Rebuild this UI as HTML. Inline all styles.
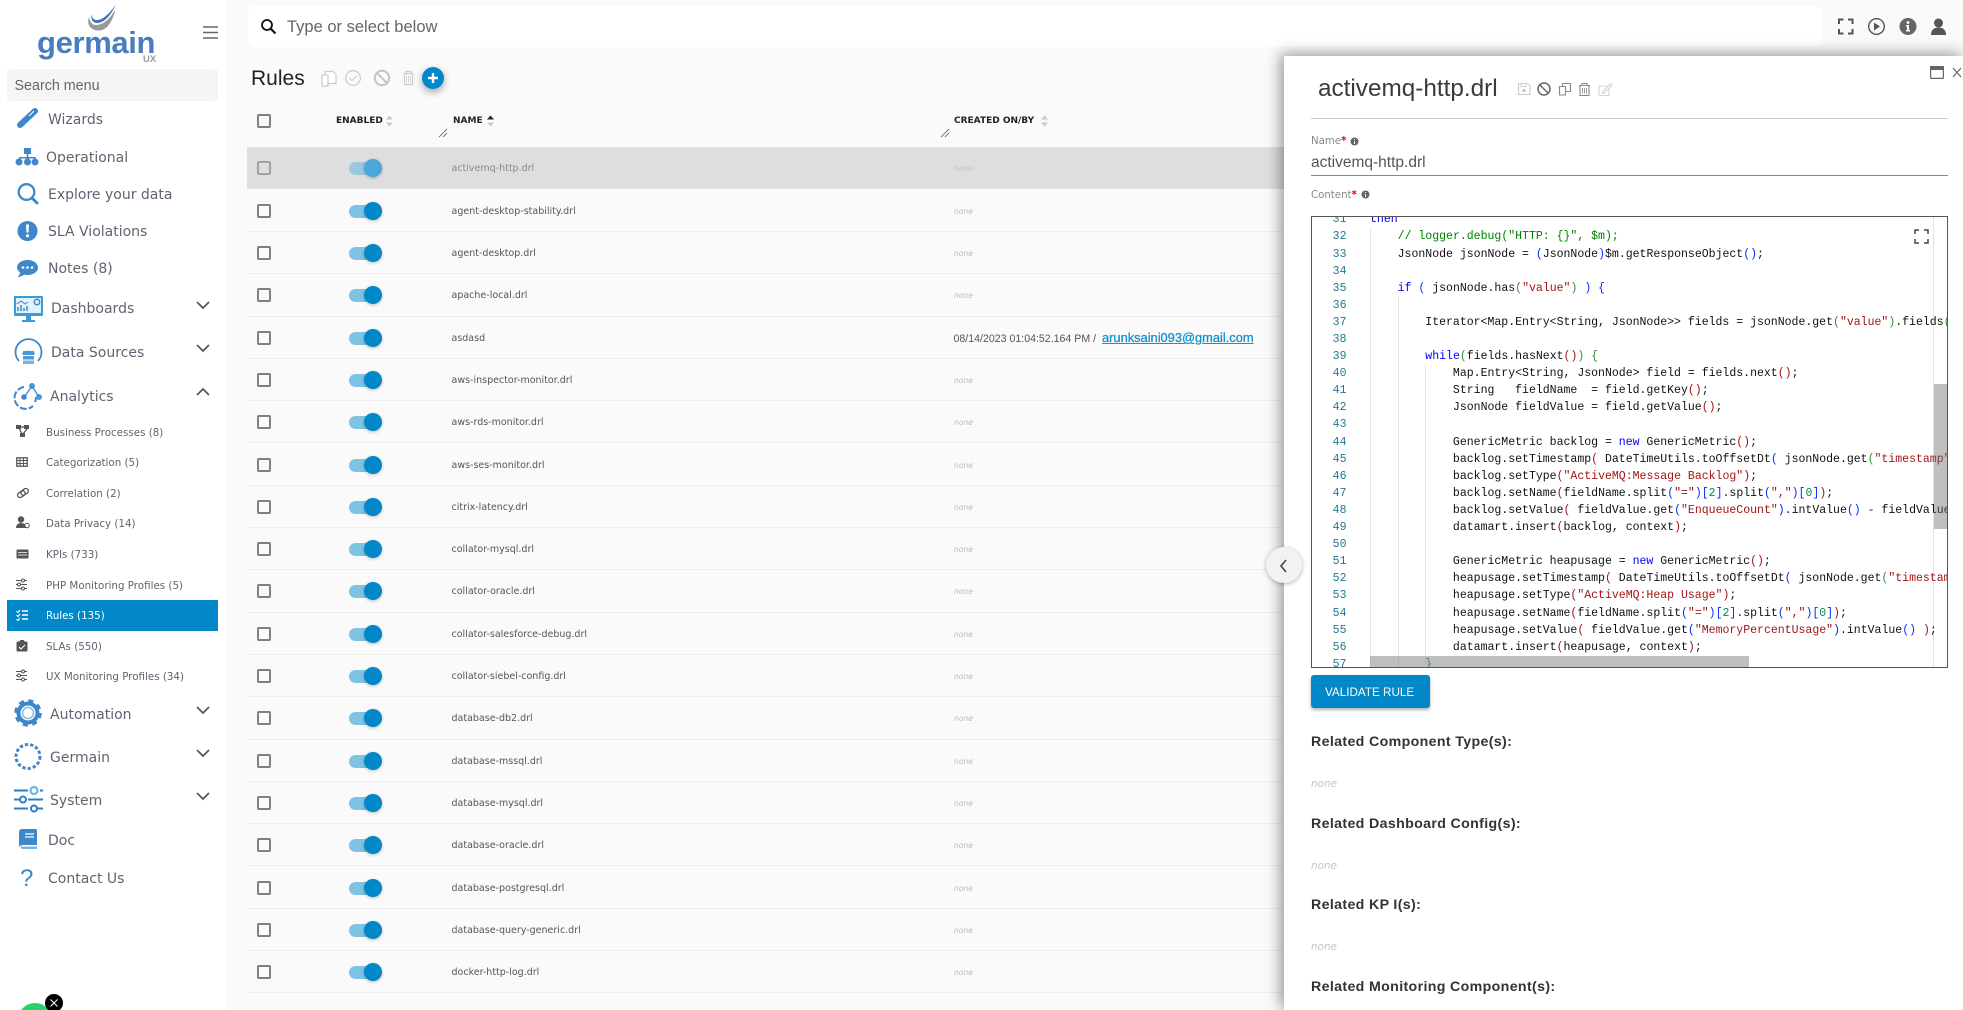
<!DOCTYPE html>
<html lang="en">
<head>
<meta charset="utf-8">
<title>Rules</title>
<style>
*{box-sizing:border-box}
html,body{margin:0;padding:0;width:1963px;height:1010px;overflow:hidden}
#root{position:relative;width:1963px;height:1010px;overflow:hidden;background:#fafafa;font-family:"DejaVu Sans","Liberation Sans",sans-serif;color:#555}
.a{position:absolute;white-space:nowrap;line-height:20px;margin-top:1px}
svg{position:absolute;overflow:visible}
#side{position:absolute;left:0;top:0;width:226px;height:1010px;background:#fff}
.m{position:absolute;white-space:nowrap;line-height:20px;font-size:14px;color:#5e6470;margin-top:1px}
.s{position:absolute;left:46px;white-space:nowrap;line-height:20px;font-size:10.3px;color:#5e6470;margin-top:1px}
.r{position:absolute;left:247px;width:1040px;height:42.3px;border-bottom:1px solid #eee}
.cb{position:absolute;left:10px;top:14px;width:14px;height:14px;border:2px solid #808080;border-radius:2px}
.tg{position:absolute;left:102px;top:15px;width:33px;height:13px;border-radius:7px;background:#7ec3e3}
.kn{position:absolute;left:117px;top:12px;width:18px;height:18px;border-radius:50%;background:#0288c9;box-shadow:0 1px 3px rgba(0,0,0,.25)}
.nm{position:absolute;left:204.5px;top:12px;line-height:20px;font-size:9.5px;color:#555;white-space:nowrap}
.no{position:absolute;left:707px;top:12px;line-height:20px;font-size:7.6px;font-style:italic;color:#bbb;white-space:nowrap}
.hd{position:absolute;top:111px;line-height:20px;font-size:9px;font-weight:bold;color:#222;white-space:nowrap}
#panel{position:absolute;left:1284px;top:56px;width:679px;height:954px;background:#fff;box-shadow:-3px -2px 14px rgba(0,0,0,.42)}
.lb{position:absolute;font-size:10.2px;color:#888;line-height:20px;white-space:nowrap;margin-top:1px}
.lb b{color:#e00;font-weight:bold}
.rel{position:absolute;left:1311px;font:bold 14.2px/20px "Liberation Sans",sans-serif;letter-spacing:.35px;color:#333;white-space:nowrap;margin-top:1px}
.nn{position:absolute;left:1311px;font-size:10.4px;font-style:italic;color:#c4c4c4;line-height:20px;margin-top:1px}
#ed{position:absolute;left:1311px;top:216px;width:637px;height:452px;border:1px solid #555;overflow:hidden;background:#fff}
pre{margin:0;position:absolute;font:11.53px/17.1px "Liberation Mono",monospace;white-space:pre}
#gut{left:0;width:34.5px;top:-5.65px;text-align:right;color:#237893}
#code{left:58px;top:-5.65px;width:577px;overflow:hidden;color:#111}
.k{color:#00f}.c{color:#008000}.t{color:#a31515}.b{color:#0431fa}.g{color:#319331}.n{color:#098658}
.gl{position:absolute;width:1px;background:#e6e6e6}
</style>
</head>
<body>
<div id="root">

<div id="side"></div>

<!-- logo -->
<svg style="left:0;top:0" width="226" height="70" viewBox="0 0 226 70">
<path d="M89 17C86 26 92 31 100 30.500C108 29.500 113 20 115.500 9C110 19 103 25 96 25C92 25 90 22 89 17Z" fill="#9a9a9a"/>
<path d="M91 14C91 21 94 23.500 98 23C106 22 112 13 116 4C111 12 104 19 98 20C94 20.500 92 18 91 14Z" fill="#3f74bd"/>
</svg>
<div class="a" style="left:37px;top:26px;font:bold 31px/32px 'Liberation Sans',sans-serif;color:#4a7cbf;letter-spacing:-.35px">germain</div>
<div class="a" style="left:143px;top:49px;font:bold 9.5px/20px 'Liberation Sans',sans-serif;color:#9a9a9a">UX</div>
<svg style="left:203px;top:26px" width="16" height="14"><path d="M0 1h15M0 6.500h15M0 12h15" stroke="#666" stroke-width="1.600"/></svg>

<div style="position:absolute;left:7px;top:69px;width:211px;height:32px;background:#f5f5f5;border-radius:3px"></div>
<div class="a" style="left:14.500px;top:75px;font:14.3px/20px 'Liberation Sans',sans-serif;color:#666">Search menu</div>

<!-- menu icons -->
<svg style="left:0;top:100px" width="226" height="800" viewBox="0 100 226 800" fill="#3e87cb">
<path d="M20 125L35 111" stroke="#3e87cb" stroke-width="6" stroke-linecap="round"/><path d="M29 116l5-5" stroke="#fff" stroke-width="1"/>
<path d="M24 148h7v6h-7zM26.700 154h1.600v3h7.500v3h-1.600v-1.500h-6v1.500h-1.500v-1.500h-6v1.500h-1.600v-3h7.600z"/><circle cx="19" cy="162" r="3.500"/><circle cx="27.500" cy="162" r="3.500"/><circle cx="35" cy="162" r="3.500"/>
<circle cx="26.500" cy="192" r="7.800" fill="none" stroke="#3e87cb" stroke-width="2.300"/><path d="M32 198l5 5" stroke="#3e87cb" stroke-width="3" stroke-linecap="round"/>
<circle cx="27.500" cy="231" r="10"/><path d="M26 224.500h3l-.5 8h-2z" fill="#fff"/><circle cx="27.500" cy="235.800" r="1.600" fill="#fff"/>
<path d="M27.500 260c5.800 0 10.500 3.300 10.500 7.500s-4.700 7.500-10.500 7.500c-1.200 0-2.300-.1-3.300-.4-2 1.600-4.500 2.400-6.500 2.400 1.300-1.400 2.200-3 2.400-4.600-1.900-1.300-3.100-3.100-3.100-4.900 0-4.200 4.700-7.500 10.500-7.500z"/><circle cx="23" cy="267.500" r="1.300" fill="#fff"/><circle cx="27.500" cy="267.500" r="1.300" fill="#fff"/><circle cx="32" cy="267.500" r="1.300" fill="#fff"/>
<rect x="14" y="296" width="29" height="20" rx="1" fill="#3e9ad6"/><rect x="16" y="298" width="25" height="15" fill="#e3f1fb"/><path d="M18 311v-4M21 311v-6M24 311v-3M27 311v-5" stroke="#3e87cb" stroke-width="1.500"/><path d="M17 304l4-3 4 3 3-2" stroke="#3e87cb" fill="none"/><circle cx="37" cy="302" r="2.700" fill="none" stroke="#3e87cb" stroke-width="1.500"/><path d="M26 316h5v4h4v2H22v-2h4z" fill="#3e9ad6"/>
<path d="M19 361a13 13 0 1 1 19 0" fill="none" stroke="#3e87cb" stroke-width="1.800"/><path d="M22.500 354a9 9 0 0 1 12 0" fill="none" stroke="#3e87cb" stroke-width="1.800"/><rect x="23" y="351" width="11" height="4" fill="#4a9ad8"/><rect x="23" y="356" width="11" height="3.500" fill="#4a9ad8"/><rect x="23" y="360.500" width="11" height="3.500" fill="#72b6e6"/>
<path d="M24 387a11 11 0 1 0 9 19M35 402a11 11 0 0 0 1-5" fill="none" stroke="#3e87cb" stroke-width="2" stroke-dasharray="7 2"/><circle cx="24" cy="397" r="2.800"/><circle cx="32" cy="386" r="3"  fill="#4a9ad8"/><circle cx="39" cy="397" r="3" fill="#4a9ad8"/><path d="M25 396l7-10 7 11" fill="none" stroke="#3e87cb" stroke-width="1.300"/>
<circle cx="28" cy="713" r="9.500" fill="none" stroke="#3e87cb" stroke-width="4"/><circle cx="28" cy="713" r="12" fill="none" stroke="#3e87cb" stroke-width="3.500" stroke-dasharray="5 4.420"/><circle cx="28" cy="713" r="5.500" fill="#fff"/><circle cx="28" cy="713" r="5.500" fill="none" stroke="#8dbbe3" stroke-width="1.500"/>
<circle cx="28" cy="756.500" r="12" fill="none" stroke="#4c83c7" stroke-width="3" stroke-dasharray="3.300 2"/>
<path d="M14 790.500h14M40 790.500h3M14 799.500h5M28 799.500h15M14 808.500h14M38 808.500h5" stroke="#2d7cc4" stroke-width="2" fill="none"/><circle cx="34" cy="790.500" r="3.500" fill="none" stroke="#6bb8ee" stroke-width="2.200"/><circle cx="23" cy="799.500" r="3" fill="none" stroke="#2d7cc4" stroke-width="2"/><circle cx="34" cy="808.500" r="3" fill="none" stroke="#2d7cc4" stroke-width="2"/>
<path d="M21 829h14.500a1.500 1.500 0 0 1 1.500 1.500V845H23a2 2 0 0 0-2 1.500v-15.500a2 2 0 0 1 0-2z"/><path d="M19 832a3 3 0 0 1 3-3v16a3 3 0 0 0-3 3z"/><path d="M21 846.500h16V849H22a2 2 0 0 1-1-2.500z" fill="#7fb2df"/><path d="M25 834h9M25 837h9" stroke="#fff" stroke-width="1.300"/>
<text x="20" y="886" font-family="Liberation Sans,sans-serif" font-size="24" fill="#3e87cb">?</text>
</svg>

<div class="m" style="left:48px;top:109px">Wizards</div>
<div class="m" style="left:46px;top:147px">Operational</div>
<div class="m" style="left:48px;top:184px">Explore your data</div>
<div class="m" style="left:48px;top:221px">SLA Violations</div>
<div class="m" style="left:48px;top:258px">Notes (8)</div>
<div class="m" style="left:51px;top:298px">Dashboards</div>
<div class="m" style="left:51px;top:342px">Data Sources</div>
<div class="m" style="left:50px;top:386px">Analytics</div>
<div class="m" style="left:50px;top:704px">Automation</div>
<div class="m" style="left:50px;top:747px">Germain</div>
<div class="m" style="left:50px;top:790px">System</div>
<div class="m" style="left:48px;top:830px">Doc</div>
<div class="m" style="left:48px;top:868px">Contact Us</div>

<svg style="left:0;top:0" width="226" height="820" fill="none" stroke="#555" stroke-width="1.700">
<path d="M197 302l6 6 6-6M197 345l6 6 6-6M197 395l6-6 6 6M197 707l6 6 6-6M197 750l6 6 6-6M197 793l6 6 6-6"/>
</svg>

<div style="position:absolute;left:7px;top:600px;width:211px;height:31px;background:#0288c8"></div>

<!-- submenu icons -->
<svg style="left:0;top:420px" width="40" height="270" viewBox="0 420 40 270" fill="#555" stroke="none">
<rect x="16" y="425" width="5" height="4"/><rect x="24" y="425" width="5" height="4"/><rect x="20" y="433" width="5" height="4"/><path d="M20 427h5M19 428l3 6M27 429l-4 5" stroke="#555" stroke-width="1.300"/>
<rect x="16.800" y="457.800" width="10.400" height="8.400" fill="none" stroke="#555" stroke-width="1.300"/><path d="M17 460.500h10M17 463.500h10M20 458v8M23.500 458v8" stroke="#555" stroke-width="1"/>
<g fill="none" stroke="#555" stroke-width="1.300" transform="rotate(-35 23 493)"><rect x="17" y="490.500" width="8" height="5" rx="2.500"/><rect x="21" y="490.500" width="8" height="5" rx="2.500"/></g>
<circle cx="21" cy="519.500" r="3.200"/><path d="M16 528c0-3 2-5 5-5s5 2 5 5z"/><circle cx="27" cy="525.500" r="2.300" fill="none" stroke="#555" stroke-width="1"/>
<rect x="16.500" y="549.500" width="12" height="9" rx="1"/><path d="M18 552.500h9M18 555h9" stroke="#fff" stroke-width=".8"/>
<path d="M16 580.500h11M16 584.500h11M16 588.500h11" stroke="#555" stroke-width="1"/><circle cx="23" cy="580.500" r="1.500" fill="#fff" stroke="#555"/><circle cx="19" cy="584.500" r="1.500" fill="#fff" stroke="#555"/><circle cx="23" cy="588.500" r="1.500" fill="#fff" stroke="#555"/>
<path d="M22 611h6M22 615h6M22 619h6" stroke="#fff" stroke-width="1.500"/><path d="M16.500 611l1.500 1.500 2-2.500M16.500 615l1.500 1.500 2-2.500M16.500 619l1.500 1.500 2-2.500" stroke="#fff" fill="none" stroke-width="1.100"/>
<path d="M17.500 641.500h2l.8-1.500h3.400l.8 1.500h2a1 1 0 0 1 1 1v8a1 1 0 0 1-1 1h-9a1 1 0 0 1-1-1v-8a1 1 0 0 1 1-1z"/><path d="M19 647l2 2 4-4" stroke="#fff" fill="none" stroke-width="1.100"/>
<path d="M16 671.500h11M16 675.500h11M16 679.500h11" stroke="#555" stroke-width="1"/><circle cx="23" cy="671.500" r="1.500" fill="#fff" stroke="#555"/><circle cx="19" cy="675.500" r="1.500" fill="#fff" stroke="#555"/><circle cx="23" cy="679.500" r="1.500" fill="#fff" stroke="#555"/>
</svg>

<div class="s" style="top:422px">Business Processes (8)</div>
<div class="s" style="top:452px">Categorization (5)</div>
<div class="s" style="top:483px">Correlation (2)</div>
<div class="s" style="top:513px">Data Privacy (14)</div>
<div class="s" style="top:544px">KPIs (733)</div>
<div class="s" style="top:575px">PHP Monitoring Profiles (5)</div>
<div class="s" style="top:605px;color:#fff">Rules (135)</div>
<div class="s" style="top:636px">SLAs (550)</div>
<div class="s" style="top:666px">UX Monitoring Profiles (34)</div>

<!-- whatsapp -->
<div style="position:absolute;left:18px;top:1003px;width:34px;height:34px;border-radius:50%;background:#25d366"></div>
<svg style="left:45px;top:994px" width="18" height="18"><circle cx="9" cy="9" r="9" fill="#000"/><path d="M5.500 5.500l7 7M12.500 5.500l-7 7" stroke="#fff" stroke-width="1"/></svg>

<!-- top search -->
<div style="position:absolute;left:248px;top:6px;width:1574px;height:41px;background:#fff;border-radius:7px"></div>
<svg style="left:260px;top:18px" width="18" height="18" fill="none" stroke="#111"><circle cx="7" cy="7" r="5" stroke-width="1.800"/><path d="M11 11l4.500 4.500" stroke-width="2.200"/></svg>
<div class="a" style="left:287px;top:16px;font:16.5px/20px 'Liberation Sans',sans-serif;color:#666">Type or select below</div>

<!-- top right icons -->
<svg style="left:1830px;top:10px" width="125" height="32" viewBox="1830 10 125 32">
<path d="M1839 24v-4.500h4.500M1848 19.500h4.500V24M1852.500 29v4.500H1848M1843.500 33.500H1839V29" fill="none" stroke="#555" stroke-width="2"/>
<circle cx="1876.500" cy="26.500" r="7.800" fill="none" stroke="#555" stroke-width="1.400"/><path d="M1874 22.500l6 4-6 4z" fill="#555"/>
<circle cx="1908" cy="26.500" r="8.500" fill="#666"/><circle cx="1908" cy="22.500" r="1.400" fill="#fff"/><path d="M1906 25h3v5h1v1.500h-4V30h1v-3.500h-1z" fill="#fff"/>
<circle cx="1938.500" cy="23" r="4.500" fill="#555"/><path d="M1931 35c0-5 3-7.500 7.500-7.500s7.500 2.500 7.500 7.500z" fill="#555"/>
</svg>

<!-- title -->
<div class="a" style="left:251px;top:66px;font:21px/24px 'Liberation Sans',sans-serif;color:#222">Rules</div>
<svg style="left:318px;top:66px" width="130" height="26" viewBox="318 66 130 26" fill="none">
<path d="M325 71.500h8l3 3v9h-11z" fill="#fff" stroke="#ccc" stroke-width="1.200"/><path d="M322 75h6v11h-6z" fill="#fff" stroke="#ccc" stroke-width="1.200"/>
<circle cx="353" cy="78" r="7.300" stroke="#ccc" stroke-width="1.300"/><path d="M349.500 78l2.500 2.500 5-5" stroke="#ccc" stroke-width="1.200"/>
<circle cx="382" cy="78" r="7.200" stroke="#c4c4c4" stroke-width="2"/><path d="M377 73l10 10" stroke="#c4c4c4" stroke-width="2"/>
<path d="M403.500 73.500h10M406 73v-1.500h5V73M404.500 74v10.500h8V74" stroke="#ccc" stroke-width="1.200"/><path d="M406.500 76v6.500M408.500 76v6.500M410.500 76v6.500" stroke="#ccc" stroke-width=".8"/>
<circle cx="433" cy="78" r="11" fill="#0288c8" style="filter:drop-shadow(0 3px 4px rgba(0,0,0,.35))"/><path d="M433 73v10M428 78h10" stroke="#fff" stroke-width="2.400"/>
</svg>

<!-- table header -->
<div style="position:absolute;left:257px;top:114px;width:14px;height:14px;border:2px solid #808080;border-radius:2px"></div>
<div class="hd" style="left:336px">ENABLED</div>
<div class="hd" style="left:453px">NAME</div>
<div class="hd" style="left:954px">CREATED ON/BY</div>
<svg style="left:380px;top:110px" width="680" height="30" viewBox="380 110 680 30">
<path d="M386 119.500l3.500-4 3.500 4zM386 122.500l3.500 4 3.500-4z" fill="#c8c8c8"/>
<path d="M487 119.500l3.500-4 3.500 4z" fill="#222"/><path d="M487 122.500l3.500 4 3.500-4z" fill="#c8c8c8"/>
<path d="M1041 119.500l3.500-4 3.500 4zM1041 122.500l3.500 4 3.500-4z" fill="#c8c8c8"/>
<path d="M439 137l8-8M443 137l4-4M941 137l8-8M945 137l4-4" stroke="#444" stroke-width=".7"/>
</svg>

<!-- rows -->
<div class="r" style="top:147px;background:#dedede;border-bottom:0"><i class="cb" style="border-color:#a0a0a0"></i><i class="tg" style="background:#9cc7de"></i><i class="kn" style="background:#4aa8d8"></i><span class="nm" style="color:#8a8a8a">activemq-http.drl</span><span class="no" style="color:#c4c4c4">none</span></div>
<div class="r" style="top:189.700px"><i class="cb"></i><i class="tg"></i><i class="kn"></i><span class="nm">agent-desktop-stability.drl</span><span class="no">none</span></div>
<div class="r" style="top:232px"><i class="cb"></i><i class="tg"></i><i class="kn"></i><span class="nm">agent-desktop.drl</span><span class="no">none</span></div>
<div class="r" style="top:274.300px"><i class="cb"></i><i class="tg"></i><i class="kn"></i><span class="nm">apache-local.drl</span><span class="no">none</span></div>
<div class="r" style="top:316.600px"><i class="cb"></i><i class="tg"></i><i class="kn"></i><span class="nm">asdasd</span></div>
<div class="r" style="top:358.900px"><i class="cb"></i><i class="tg"></i><i class="kn"></i><span class="nm">aws-inspector-monitor.drl</span><span class="no">none</span></div>
<div class="r" style="top:401.200px"><i class="cb"></i><i class="tg"></i><i class="kn"></i><span class="nm">aws-rds-monitor.drl</span><span class="no">none</span></div>
<div class="r" style="top:443.500px"><i class="cb"></i><i class="tg"></i><i class="kn"></i><span class="nm">aws-ses-monitor.drl</span><span class="no">none</span></div>
<div class="r" style="top:485.800px"><i class="cb"></i><i class="tg"></i><i class="kn"></i><span class="nm">citrix-latency.drl</span><span class="no">none</span></div>
<div class="r" style="top:528.100px"><i class="cb"></i><i class="tg"></i><i class="kn"></i><span class="nm">collator-mysql.drl</span><span class="no">none</span></div>
<div class="r" style="top:570.400px"><i class="cb"></i><i class="tg"></i><i class="kn"></i><span class="nm">collator-oracle.drl</span><span class="no">none</span></div>
<div class="r" style="top:612.700px"><i class="cb"></i><i class="tg"></i><i class="kn"></i><span class="nm">collator-salesforce-debug.drl</span><span class="no">none</span></div>
<div class="r" style="top:655px"><i class="cb"></i><i class="tg"></i><i class="kn"></i><span class="nm">collator-siebel-config.drl</span><span class="no">none</span></div>
<div class="r" style="top:697.300px"><i class="cb"></i><i class="tg"></i><i class="kn"></i><span class="nm">database-db2.drl</span><span class="no">none</span></div>
<div class="r" style="top:739.600px"><i class="cb"></i><i class="tg"></i><i class="kn"></i><span class="nm">database-mssql.drl</span><span class="no">none</span></div>
<div class="r" style="top:781.900px"><i class="cb"></i><i class="tg"></i><i class="kn"></i><span class="nm">database-mysql.drl</span><span class="no">none</span></div>
<div class="r" style="top:824.200px"><i class="cb"></i><i class="tg"></i><i class="kn"></i><span class="nm">database-oracle.drl</span><span class="no">none</span></div>
<div class="r" style="top:866.500px"><i class="cb"></i><i class="tg"></i><i class="kn"></i><span class="nm">database-postgresql.drl</span><span class="no">none</span></div>
<div class="r" style="top:908.800px"><i class="cb"></i><i class="tg"></i><i class="kn"></i><span class="nm">database-query-generic.drl</span><span class="no">none</span></div>
<div class="r" style="top:951.100px"><i class="cb"></i><i class="tg"></i><i class="kn"></i><span class="nm">docker-http-log.drl</span><span class="no">none</span></div>

<div class="a" style="left:953.500px;top:328px;font:10.6px/20px 'Liberation Sans',sans-serif;color:#555">08/14/2023 01:04:52.164 PM /</div>
<div class="a" style="left:1102px;top:327px;font:12.85px/20px 'Liberation Sans',sans-serif;color:#1592cf;text-decoration:underline;-webkit-text-stroke:.3px #1592cf">arunksaini093@gmail.com</div>

<!-- panel -->
<div id="panel"></div>
<svg style="left:1925px;top:60px" width="38" height="24" viewBox="1925 60 38 24" fill="none">
<rect x="1930.600" y="66.600" width="12.800" height="11.800" rx="1" stroke="#666" stroke-width="1.200"/><rect x="1930" y="66" width="14" height="4" fill="#666"/>
<path d="M1953 68l8 9M1961 68l-8 9" stroke="#666" stroke-width="1.200"/>
</svg>
<div class="a" style="left:1318px;top:74px;font:24.300px/28px 'Liberation Sans',sans-serif;color:#3a3a3a">activemq-http.drl</div>
<svg style="left:1515px;top:78px" width="100" height="22" viewBox="1515 78 100 22" fill="none">
<path d="M1518.500 83.500h9l2.500 2.500v8.500h-11.500z" stroke="#ccc" stroke-width="1.100"/><path d="M1521 83.500v3h5v-3" stroke="#ccc"/><circle cx="1524" cy="90.500" r="1.500" fill="#bbb"/>
<circle cx="1544" cy="89" r="6" stroke="#666" stroke-width="1.500"/><path d="M1540 85l8 8" stroke="#666" stroke-width="1.500"/>
<path d="M1562.500 83.500h8v8h-8z" stroke="#888" stroke-width="1.100" fill="#fff"/><path d="M1559.500 86.500h6v8.500h-6z" stroke="#888" stroke-width="1.100" fill="#fff"/>
<path d="M1579 85.500h11M1582 85v-1.500h5v1.500M1580 86v9.500h9V86" stroke="#888" stroke-width="1.100"/><path d="M1582.500 88v5.500M1584.500 88v5.500M1586.500 88v5.500" stroke="#888" stroke-width=".8"/>
<path d="M1607 86h-8v9.500h10v-7" stroke="#d4d4d4" stroke-width="1.100"/><path d="M1603 91.500l7.500-8 1.500 1.500-7.500 8-2 .5z" stroke="#d4d4d4" stroke-width="1.100"/>
</svg>
<div style="position:absolute;left:1311px;top:118px;width:637px;height:1px;background:#ccc"></div>

<div class="lb" style="left:1311px;top:131px">Name<b>*</b></div>
<svg style="left:1350px;top:137px" width="9" height="9"><circle cx="4.500" cy="4.500" r="4" fill="#666"/><path d="M4.500 2v1M4.500 4v3" stroke="#fff"/></svg>
<div class="a" style="left:1311px;top:152px;font:15.500px/20px 'Liberation Sans',sans-serif;color:#555">activemq-http.drl</div>
<div style="position:absolute;left:1311px;top:175px;width:637px;height:1px;background:#888"></div>
<div class="lb" style="left:1311px;top:185px">Content<b>*</b></div>
<svg style="left:1361px;top:190px" width="9" height="9"><circle cx="4.500" cy="4.500" r="4" fill="#666"/><path d="M4.500 2v1M4.500 4v3" stroke="#fff"/></svg>

<!-- editor -->
<div id="ed">
<div class="gl" style="left:58px;top:11px;height:440px"></div>
<div class="gl" style="left:85.500px;top:79px;height:372px"></div>
<div class="gl" style="left:112.500px;top:147px;height:300px"></div>
<div class="gl" style="left:621px;top:0;height:452px;background:#e2e2e2"></div>
<pre id="gut">31
32
33
34
35
36
37
38
39
40
41
42
43
44
45
46
47
48
49
50
51
52
53
54
55
56
57</pre>
<pre id="code"><span class="k">then</span>
    <span class="c">// logger.debug("HTTP: {}", $m);</span>
    JsonNode jsonNode = <span class="b">(</span>JsonNode<span class="b">)</span>$m.getResponseObject<span class="b">()</span>;

    <span class="k">if</span> <span class="b">(</span> jsonNode.has<span class="g">(</span><span class="t">"value"</span><span class="g">)</span> <span class="b">)</span> <span class="b">{</span>

        Iterator&lt;Map.Entry&lt;String, JsonNode&gt;&gt; fields = jsonNode.get<span class="g">(</span><span class="t">"value"</span><span class="g">)</span>.fields<span class="g">()</span>;

        <span class="k">while</span><span class="g">(</span>fields.hasNext<span class="t">()</span><span class="g">)</span> <span class="g">{</span>
            Map.Entry&lt;String, JsonNode&gt; field = fields.next<span class="t">()</span>;
            String   fieldName  = field.getKey<span class="t">()</span>;
            JsonNode fieldValue = field.getValue<span class="t">()</span>;

            GenericMetric backlog = <span class="k">new</span> GenericMetric<span class="t">()</span>;
            backlog.setTimestamp<span class="t">(</span> DateTimeUtils.toOffsetDt<span class="b">(</span> jsonNode.get<span class="g">(</span><span class="t">"timestamp"</span><span class="g">)</span>.asText<span class="g">()</span> <span class="b">)</span> <span class="t">)</span>;
            backlog.setType<span class="t">(</span><span class="t">"ActiveMQ:Message Backlog"</span><span class="t">)</span>;
            backlog.setName<span class="t">(</span>fieldName.split<span class="b">(</span><span class="t">"="</span><span class="b">)[</span><span class="n">2</span><span class="b">]</span>.split<span class="b">(</span><span class="t">","</span><span class="b">)[</span><span class="n">0</span><span class="b">]</span><span class="t">)</span>;
            backlog.setValue<span class="t">(</span> fieldValue.get<span class="b">(</span><span class="t">"EnqueueCount"</span><span class="b">)</span>.intValue<span class="b">()</span> - fieldValue.get<span class="b">(</span><span class="t">"DequeueCount"</span><span class="b">)</span>.intValue<span class="b">()</span> <span class="t">)</span>;
            datamart.insert<span class="t">(</span>backlog, context<span class="t">)</span>;

            GenericMetric heapusage = <span class="k">new</span> GenericMetric<span class="t">()</span>;
            heapusage.setTimestamp<span class="t">(</span> DateTimeUtils.toOffsetDt<span class="b">(</span> jsonNode.get<span class="g">(</span><span class="t">"timestamp"</span><span class="g">)</span>.asText<span class="g">()</span> <span class="b">)</span> <span class="t">)</span>;
            heapusage.setType<span class="t">(</span><span class="t">"ActiveMQ:Heap Usage"</span><span class="t">)</span>;
            heapusage.setName<span class="t">(</span>fieldName.split<span class="b">(</span><span class="t">"="</span><span class="b">)[</span><span class="n">2</span><span class="b">]</span>.split<span class="b">(</span><span class="t">","</span><span class="b">)[</span><span class="n">0</span><span class="b">]</span><span class="t">)</span>;
            heapusage.setValue<span class="t">(</span> fieldValue.get<span class="b">(</span><span class="t">"MemoryPercentUsage"</span><span class="b">)</span>.intValue<span class="b">()</span> <span class="t">)</span>;
            datamart.insert<span class="t">(</span>heapusage, context<span class="t">)</span>;
        <span class="g">}</span></pre>
<div style="position:absolute;left:58px;top:439px;width:379px;height:12px;background:rgba(110,110,110,.44)"></div>
<div style="position:absolute;left:622px;top:167px;width:13px;height:145px;background:rgba(110,110,110,.44)"></div>
<svg style="left:602px;top:12px" width="16" height="16" fill="none"><path d="M1 5V1h4M10 1h4v4M14 10v4h-4M5 14H1v-4" stroke="#444" stroke-width="1.500"/></svg>
</div>

<!-- collapse -->
<div style="position:absolute;left:1266px;top:547px;width:36px;height:36px;border-radius:50%;background:#f2f2f2;box-shadow:0 1px 5px rgba(0,0,0,.3)"></div>
<svg style="left:1278px;top:557px" width="12" height="18" fill="none"><path d="M8 3L3 9l5 6" stroke="#444" stroke-width="1.600"/></svg>

<!-- validate -->
<div style="position:absolute;left:1311px;top:675px;width:119px;height:33px;background:#0288c8;border-radius:3px;box-shadow:0 2px 3px rgba(0,0,0,.3)"></div>
<div class="a" style="left:1325px;top:681.500px;font:11.700px/20px 'Liberation Sans',sans-serif;color:#fff">VALIDATE RULE</div>

<div class="rel" style="top:731px">Related Component Type(s):</div>
<div class="nn" style="top:773px">none</div>
<div class="rel" style="top:813px">Related Dashboard Config(s):</div>
<div class="nn" style="top:855px">none</div>
<div class="rel" style="top:894px">Related KP I(s):</div>
<div class="nn" style="top:936px">none</div>
<div class="rel" style="top:976px">Related Monitoring Component(s):</div>

</div>
</body>
</html>
